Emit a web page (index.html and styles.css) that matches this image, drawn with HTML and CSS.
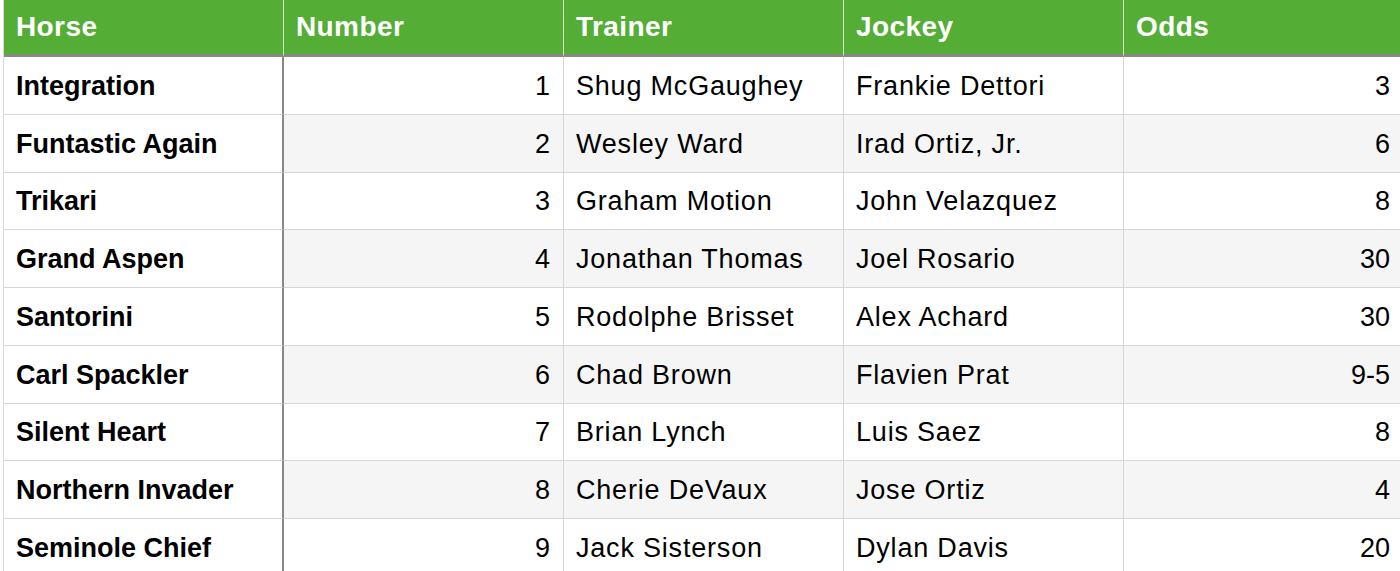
FILE: index.html
```html
<!DOCTYPE html>
<html>
<head>
<meta charset="utf-8">
<link rel="stylesheet" href="styles.css">
</head>
<body>
<div class="sheet">
  <div class="hcell">Horse</div>
  <div class="hcell">Number</div>
  <div class="hcell">Trainer</div>
  <div class="hcell">Jockey</div>
  <div class="hcell">Odds</div>

  <div class="cell name">Integration</div><div class="cell num">1</div><div class="cell">Shug McGaughey</div><div class="cell">Frankie Dettori</div><div class="cell num">3</div>
  <div class="cell name">Funtastic Again</div><div class="cell num alt">2</div><div class="cell alt">Wesley Ward</div><div class="cell alt">Irad Ortiz, Jr.</div><div class="cell num alt">6</div>
  <div class="cell name">Trikari</div><div class="cell num">3</div><div class="cell">Graham Motion</div><div class="cell">John Velazquez</div><div class="cell num">8</div>
  <div class="cell name">Grand Aspen</div><div class="cell num alt">4</div><div class="cell alt">Jonathan Thomas</div><div class="cell alt">Joel Rosario</div><div class="cell num alt">30</div>
  <div class="cell name">Santorini</div><div class="cell num">5</div><div class="cell">Rodolphe Brisset</div><div class="cell">Alex Achard</div><div class="cell num">30</div>
  <div class="cell name">Carl Spackler</div><div class="cell num alt">6</div><div class="cell alt">Chad Brown</div><div class="cell alt">Flavien Prat</div><div class="cell num alt">9-5</div>
  <div class="cell name">Silent Heart</div><div class="cell num">7</div><div class="cell">Brian Lynch</div><div class="cell">Luis Saez</div><div class="cell num">8</div>
  <div class="cell name">Northern Invader</div><div class="cell num alt">8</div><div class="cell alt">Cherie DeVaux</div><div class="cell alt">Jose Ortiz</div><div class="cell num alt">4</div>
  <div class="cell name">Seminole Chief</div><div class="cell num">9</div><div class="cell">Jack Sisterson</div><div class="cell">Dylan Davis</div><div class="cell num">20</div>
</div>
</body>
</html>
```

FILE: styles.css
```css
html, body {
  margin: 0;
  padding: 0;
  background: #ffffff;
  overflow: hidden;
}

body {
  padding-left: 3px;
  font-family: "Liberation Sans", Arial, sans-serif;
  font-size: 27px;
  color: #000000;
}

.sheet {
  display: grid;
  grid-template-columns: repeat(5, 280px);
  grid-template-rows: 57px;
  grid-auto-rows: 57.75px;
  border-left: 1px solid #d9d9d9;
  width: max-content;
}

.hcell {
  box-sizing: border-box;
  background: #54ae35;
  color: #ffffff;
  font-size: 28px;
  font-weight: bold;
  letter-spacing: 0.4px;
  display: flex;
  align-items: center;
  padding: 0 13px 0 12px;
  border-right: 1px solid rgba(255, 255, 255, 0.75);
  border-bottom: 3px solid #8b8884;
}

.cell {
  box-sizing: border-box;
  display: flex;
  align-items: center;
  padding: 2px 13px 0 12px;
  border-right: 1px solid #d6d6d6;
  border-bottom: 1px solid #d6d6d6;
  background: #ffffff;
  white-space: nowrap;
  letter-spacing: 0.8px;
}

.cell.alt {
  background: #f5f5f5;
}

.cell.name {
  font-weight: bold;
  letter-spacing: 0;
  border-right: 2px solid #8b8884;
  padding-right: 12px;
}

.cell.num {
  justify-content: flex-end;
  letter-spacing: 0;
}
```
